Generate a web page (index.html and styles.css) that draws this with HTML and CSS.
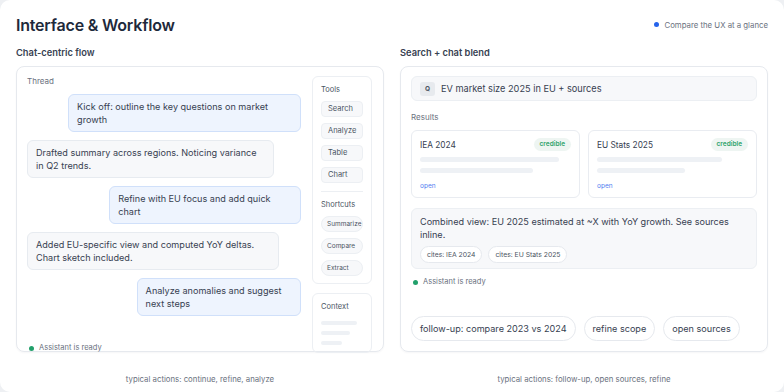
FILE: index.html
```html
<!DOCTYPE html>
<html lang="en">
<head>
  <meta charset="UTF-8">
  <title>Interface &amp; Workflow</title>
  <link rel="stylesheet" href="styles.css">
</head>
<body>
  <div class="page">
    <div class="header">
      <h1>Interface &amp; Workflow</h1>
      <div class="legend">
        <span class="legend-dot"></span>
        <span>Compare the UX at a glance</span>
      </div>
    </div>

    <div class="columns">
      <!-- Chat-centric -->
      <div class="col">
        <h2>Chat-centric flow</h2>
        <div class="panel chat-panel">
          <div class="thread">
            <div class="label">Thread</div>
            <div class="bubble user w85">Kick off: outline the key questions on market growth</div>
            <div class="bubble bot w90">Drafted summary across regions. Noticing variance in Q2 trends.</div>
            <div class="bubble user w70">Refine with EU focus and add quick chart</div>
            <div class="bubble bot w92">Added EU-specific view and computed YoY deltas. Chart sketch included.</div>
            <div class="bubble user w60">Analyze anomalies and suggest next steps</div>
            <div class="ready ready-bottom"><span class="ready-dot"></span>Assistant is ready</div>
          </div>
          <div class="side">
            <div class="side-box">
              <div class="side-label">Tools</div>
              <div class="tool">Search</div>
              <div class="tool">Analyze</div>
              <div class="tool">Table</div>
              <div class="tool">Chart</div>
              <div class="divider"></div>
              <div class="side-label">Shortcuts</div>
              <div class="tool pill">Summarize</div>
              <div class="tool pill">Compare</div>
              <div class="tool pill">Extract</div>
            </div>
            <div class="side-box context">
              <div class="side-label">Context</div>
              <div class="skel" style="width: 36px"></div>
              <div class="skel" style="width: 29px"></div>
              <div class="skel" style="width: 21px"></div>
            </div>
          </div>
        </div>
        <p class="foot">typical actions: continue, refine, analyze</p>
      </div>

      <!-- Search + chat -->
      <div class="col">
        <h2>Search + chat blend</h2>
        <div class="panel search-panel">
          <div class="search-bar">
            <span class="q">Q</span>
            <span>EV market size 2025 in EU + sources</span>
          </div>
          <div class="label results-label">Results</div>
          <div class="results">
            <div class="result">
              <div class="result-head">
                <span>IEA 2024</span>
                <span class="badge">credible</span>
              </div>
              <div class="bar" style="width: 92%"></div>
              <div class="bar" style="width: 75%"></div>
              <div class="open">open</div>
            </div>
            <div class="result">
              <div class="result-head">
                <span>EU Stats 2025</span>
                <span class="badge">credible</span>
              </div>
              <div class="bar" style="width: 83%"></div>
              <div class="bar" style="width: 58%"></div>
              <div class="open">open</div>
            </div>
          </div>
          <div class="combined">
            <p>Combined view: EU 2025 estimated at ~X with YoY growth. See sources inline.</p>
            <div class="cites">
              <span class="cite">cites: IEA 2024</span>
              <span class="cite">cites: EU Stats 2025</span>
            </div>
          </div>
          <div class="ready"><span class="ready-dot"></span>Assistant is ready</div>
          <div class="followups">
            <span class="chip">follow-up: compare 2023 vs 2024</span>
            <span class="chip">refine scope</span>
            <span class="chip">open sources</span>
          </div>
        </div>
        <p class="foot">typical actions: follow-up, open sources, refine</p>
      </div>
    </div>
  </div>
</body>
</html>
```

FILE: styles.css
```css
* {
  margin: 0;
  padding: 0;
  box-sizing: border-box;
}

body {
  width: 784px;
  height: 392px;
  background: #eef0f3;
  font-family: Inter, 'Noto Sans', sans-serif;
  color: #374151;
  overflow: hidden;
}

.page {
  width: 784px;
  height: 392px;
  background: #ffffff;
  border-radius: 10px;
  padding: 14px 16px 0;
}

.header {
  display: flex;
  justify-content: space-between;
  align-items: center;
  height: 21px;
}

.header h1 {
  font-size: 16px;
  font-weight: 600;
  color: #1e293b;
  letter-spacing: -0.2px;
}

.legend {
  display: flex;
  align-items: center;
  gap: 5px;
  font-size: 7.8px;
  color: #6b7280;
}

.legend-dot {
  width: 5px;
  height: 5px;
  border-radius: 50%;
  background: #2563eb;
}

.columns {
  display: grid;
  grid-template-columns: 368px 368px;
  gap: 16px;
  margin-top: 11px;
}

.col h2 {
  font-size: 9.3px;
  font-weight: 600;
  line-height: 14px;
  color: #374151;
  margin-bottom: 6px;
}

.panel {
  height: 286px;
  border: 1px solid #e6e9ee;
  border-radius: 8px;
  box-shadow: 0 1px 2px rgba(15, 23, 42, 0.04);
}

.foot {
  margin-top: 21px;
  text-align: center;
  font-size: 7.8px;
  line-height: 12px;
  color: #6b7280;
}

.label {
  font-size: 8px;
  line-height: 10px;
  color: #6b7280;
}

/* chat panel */

.chat-panel {
  display: grid;
  grid-template-columns: 1fr 60px;
  gap: 11px;
  padding: 9px 11px 0 10px;
}

.thread {
  display: flex;
  flex-direction: column;
  gap: 8px;
}

.bubble {
  font-size: 9.1px;
  line-height: 13px;
  padding: 5px 8px;
  border-radius: 6px;
  color: #374151;
}

.bubble.user {
  align-self: flex-end;
  background: #eef4fe;
  border: 1px solid #d0e0fa;
}

.bubble.bot {
  align-self: flex-start;
  background: #f7f8fa;
  border: 1px solid #e7ebf0;
}

.w60 { width: 60%; }
.w70 { width: 70%; }
.w85 { width: 85%; }
.w90 { width: 90%; }
.w92 { width: 92%; }

.ready {
  display: flex;
  align-items: center;
  gap: 5px;
  font-size: 7.5px;
  line-height: 10px;
  color: #6b7280;
}

.ready-bottom {
  margin-top: auto;
  padding-left: 2px;
}

.ready-dot {
  width: 5px;
  height: 5px;
  border-radius: 50%;
  background: #22a06b;
}

.side {
  display: flex;
  flex-direction: column;
  gap: 9px;
}

.side-box {
  display: flex;
  flex-direction: column;
  gap: 6px;
  border: 1px solid #eceff3;
  border-radius: 6px;
  padding: 8px 8px 7px;
}

.side-label {
  font-size: 7.5px;
  line-height: 10px;
  color: #4b5563;
}

.tool {
  height: 16px;
  line-height: 14px;
  padding: 0 6px;
  font-size: 7.5px;
  color: #4b5563;
  background: #f7f8fa;
  border: 1px solid #eceff3;
  border-radius: 4px;
  white-space: nowrap;
  overflow: hidden;
}

.tool.pill {
  border-radius: 8px;
  font-size: 6.5px;
  padding: 0 5px;
}

.divider {
  height: 1px;
  background: #eceff3;
  margin: 2px 0;
}

.context {
  flex: 1;
  gap: 6px;
}

.context .side-label {
  margin-bottom: 3px;
}

.skel {
  height: 4px;
  border-radius: 2px;
  background: #eef1f5;
}

/* search panel */

.search-panel {
  display: flex;
  flex-direction: column;
  padding: 9px 10px 10px;
}

.search-bar {
  display: flex;
  align-items: center;
  gap: 6px;
  height: 25px;
  padding: 0 8px;
  background: #f7f8fa;
  border: 1px solid #eceff3;
  border-radius: 6px;
  font-size: 9.2px;
  color: #374151;
}

.q {
  width: 15px;
  height: 14px;
  line-height: 14px;
  text-align: center;
  font-size: 6.5px;
  font-weight: 700;
  color: #4b5563;
  background: #e7eaee;
  border-radius: 3px;
}

.results-label {
  margin-top: 11px;
}

.results {
  display: grid;
  grid-template-columns: 1fr 1fr;
  gap: 8px;
  margin-top: 8px;
}

.result {
  height: 68px;
  border: 1px solid #e9ecf1;
  border-radius: 6px;
  padding: 7px 8px 0;
}

.result-head {
  display: flex;
  justify-content: space-between;
  align-items: center;
  height: 13px;
  font-size: 8.3px;
  color: #374151;
  margin-bottom: 4px;
}

.badge {
  height: 13px;
  line-height: 13px;
  padding: 0 6px;
  border-radius: 7px;
  background: #eef5f2;
  color: #2fa36b;
  font-size: 6.5px;
  font-weight: 600;
}

.bar {
  height: 5px;
  border-radius: 3px;
  background: #eef1f5;
  margin-top: 6px;
}

.bar:first-of-type {
  margin-top: 0;
}

.open {
  margin-top: 8px;
  font-size: 6.5px;
  line-height: 10px;
  color: #4f7cf0;
}

.combined {
  margin-top: 10px;
  padding: 6px 8px 5px;
  background: #f7f8fa;
  border: 1px solid #eceff3;
  border-radius: 6px;
}

.combined p {
  font-size: 9.1px;
  line-height: 13px;
  color: #374151;
}

.cites {
  display: flex;
  gap: 6px;
  margin-top: 5px;
}

.cite {
  height: 17px;
  line-height: 15px;
  padding: 0 6px;
  font-size: 6.8px;
  color: #4b5563;
  background: #ffffff;
  border: 1px solid #e6e9ee;
  border-radius: 9px;
}

.search-panel .ready {
  margin-top: 8px;
  padding-left: 2px;
}

.followups {
  display: flex;
  gap: 8px;
  margin-top: auto;
}

.chip {
  height: 25px;
  line-height: 23px;
  padding: 0 8px;
  font-size: 9.1px;
  color: #374151;
  background: #ffffff;
  border: 1px solid #e6e9ee;
  border-radius: 13px;
}
```
